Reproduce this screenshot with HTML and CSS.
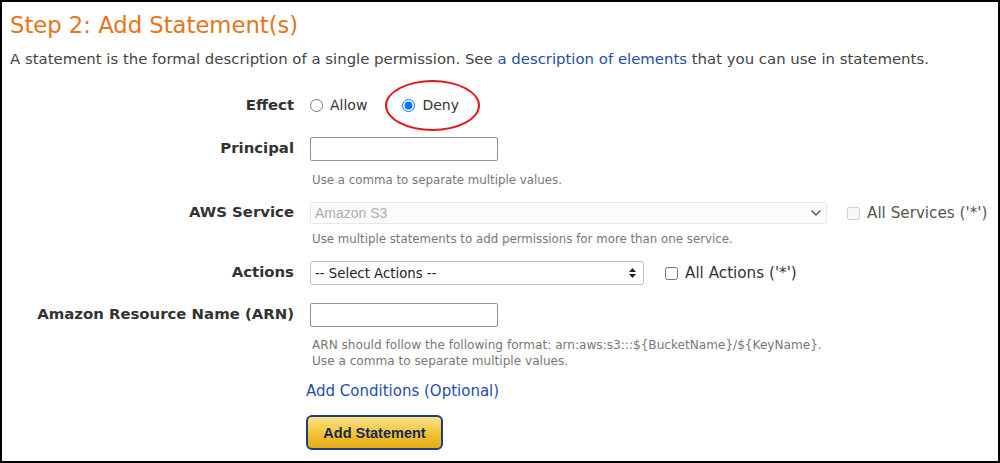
FILE: index.html
```html
<!DOCTYPE html>
<html>
<head>
<meta charset="utf-8">
<link rel="stylesheet" href="styles.css">
</head>
<body>
<div class="frame">
  <h2 class="title">Step 2: Add Statement(s)</h2>
  <p class="desc">A statement is the formal description of a single permission. See <a href="#">a description of elements</a> that you can use in statements.</p>

  <div class="row row-effect">
    <label class="lbl">Effect</label>
    <div class="ctl radios">
      <label class="opt"><input type="radio" name="effect"> Allow</label>
      <label class="opt deny"><input type="radio" name="effect" checked> Deny<span class="ring"></span></label>
    </div>
  </div>

  <div class="row row-principal">
    <label class="lbl lh24">Principal</label>
    <div class="ctl">
      <input class="text" type="text">
      <div class="hint hint1">Use a comma to separate multiple values.</div>
    </div>
  </div>

  <div class="row row-aws">
    <label class="lbl lh22">AWS Service</label>
    <div class="ctl">
      <div class="line">
        <div class="selwrap sel-aws">
          <select class="sel" disabled><option>Amazon S3</option></select>
          <svg class="chev" width="12" height="8" viewBox="0 0 12 8"><path d="M1.5 1.5 L6 6 L10.5 1.5" fill="none" stroke="#555" stroke-width="1.4"/></svg>
        </div>
        <label class="chk disabled"><input type="checkbox" disabled> All Services ('*')</label>
      </div>
      <div class="hint hint2">Use multiple statements to add permissions for more than one service.</div>
    </div>
  </div>

  <div class="row row-actions">
    <label class="lbl lh24">Actions</label>
    <div class="ctl">
      <div class="line">
        <div class="selwrap sel-actions">
          <select class="sel sel2"><option>-- Select Actions --</option></select>
          <svg class="updown" width="7" height="10" viewBox="0 0 7 10"><path d="M3.5 0 L7 4 L0 4 Z M3.5 10 L7 6 L0 6 Z" fill="#222"/></svg>
        </div>
        <label class="chk"><input type="checkbox"> All Actions ('*')</label>
      </div>
    </div>
  </div>

  <div class="row row-arn">
    <label class="lbl lh24">Amazon Resource Name (ARN)</label>
    <div class="ctl">
      <input class="text" type="text">
      <div class="hint hint3">ARN should follow the following format: arn:aws:s3:::${BucketName}/${KeyName}.<br>Use a comma to separate multiple values.</div>
    </div>
  </div>

  <div class="row row-link">
    <span></span>
    <div class="ctl"><a class="cond" href="#">Add Conditions (Optional)</a></div>
  </div>

  <div class="row row-btn">
    <span></span>
    <div class="ctl"><button class="btn">Add Statement</button></div>
  </div>
</div>
</body>
</html>
```

FILE: styles.css
```css
html, body {
  margin: 0;
  padding: 0;
  background: #fff;
}
.frame {
  box-sizing: border-box;
  width: 1000px;
  height: 463px;
  border: 2px solid #000;
  padding: 0 8px;
  font-family: "DejaVu Sans", Verdana, sans-serif;
  color: #333;
  overflow: hidden;
}
.title {
  margin: 10px 0 0 0;
  font-weight: normal;
  font-size: 22.7px;
  line-height: 26px;
  color: #e47620;
}
.desc {
  margin: 12px 0 0 0;
  font-size: 14.9px;
  line-height: 18px;
  color: #444;
}
.desc a {
  color: #1f4ea8;
  text-decoration: none;
}
.row {
  display: grid;
  grid-template-columns: 284px 1fr;
  column-gap: 16px;
  align-items: start;
}
.lbl {
  text-align: right;
  font-weight: bold;
  font-size: 14.9px;
  line-height: 20px;
  color: #333;
}
.lh24 { line-height: 22px; }
.lh22 { line-height: 20px; }
.row-effect { margin-top: 27px; }
.radios {
  display: flex;
  align-items: center;
  gap: 35px;
  font-size: 14px;
  line-height: 20px;
  color: #333;
}
.opt {
  display: inline-flex;
  align-items: center;
  position: relative;
}
.opt input {
  margin: 0 7px 0 0;
  width: 13px;
  height: 13px;
}
.ring {
  position: absolute;
  left: -17px;
  top: -15px;
  width: 91px;
  height: 47px;
  border: 2px solid #e0191f;
  border-radius: 50%;
}
.row-principal { margin-top: 22px; }
.text {
  display: block;
  box-sizing: border-box;
  width: 188px;
  height: 24px;
  border: 1px solid #8f8f8f;
  border-radius: 2px;
  margin: 0;
}
.hint {
  font-size: 11.8px;
  line-height: 14px;
  color: #777;
  padding-left: 2px;
}
.hint1 { margin-top: 12px; }
.row-aws { margin-top: 15px; }
.line {
  display: flex;
  align-items: center;
}
.selwrap {
  position: relative;
}
.sel {
  -webkit-appearance: none;
  appearance: none;
  display: block;
  box-sizing: border-box;
  margin: 0;
  font-family: "Liberation Sans", Arial, sans-serif;
  font-size: 14px;
}
.sel-aws .sel {
  width: 517px;
  height: 22px;
  padding: 0 4px;
  border: 1px solid #ddd;
  border-radius: 2px;
  background: #fafafa;
  color: #8a8a8a;
}
.chev {
  position: absolute;
  right: 5px;
  top: 7px;
}
.chk {
  display: inline-flex;
  align-items: center;
  font-size: 15.2px;
  line-height: 20px;
  color: #333;
}
.chk input {
  margin: 0 7px 0 0;
  width: 13px;
  height: 13px;
}
.sel-aws + .chk { margin-left: 20px; }
.chk.disabled { color: #555; }
.hint2 { margin-top: 8px; }
.row-actions { margin-top: 15px; }
.sel-actions .sel {
  width: 334px;
  height: 24px;
  padding: 0 4px;
  border: 1px solid #bdbdbd;
  border-radius: 3px;
  background: #fff;
  color: #222;
  font-family: "DejaVu Sans", Verdana, sans-serif;
  font-size: 13.3px;
}
.updown {
  position: absolute;
  right: 8px;
  top: 7px;
}
.sel-actions + .chk { margin-left: 21px; }
.row-arn { margin-top: 18px; }
.hint3 { margin-top: 10px; line-height: 16px; font-size: 12.1px; }
.row-link { margin-top: 12px; }
.cond {
  display: block;
  margin-left: -4px;
  font-size: 15px;
  line-height: 20px;
  color: #1f4ea8;
  text-decoration: none;
}
.row-btn { margin-top: 14px; }
.btn {
  display: block;
  margin-left: -4px;
  box-sizing: border-box;
  width: 137px;
  height: 35px;
  border: 2px solid #203d7e;
  border-radius: 6px;
  background: linear-gradient(#fbe38c, #f0c233 55%, #e6ab12);
  color: #16275a;
  font-family: "Liberation Sans", Arial, sans-serif;
  font-weight: bold;
  font-size: 14.5px;
  padding: 0;
}
```
